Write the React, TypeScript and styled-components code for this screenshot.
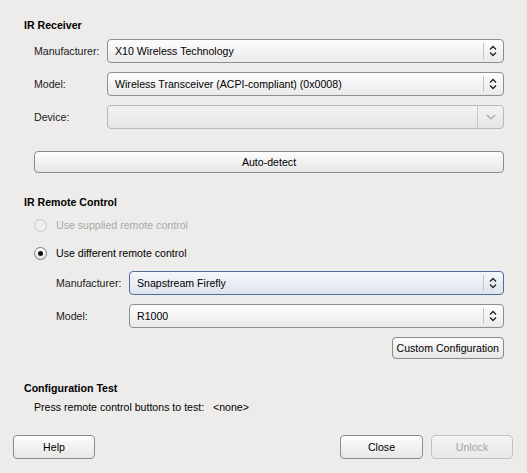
import React from "react";
import styled, {createGlobalStyle, css} from "styled-components";

const GlobalStyle = createGlobalStyle`
  html, body {
    margin: 0;
    padding: 0;
    background: #edecea;
  }
  body {
    font-family: "Liberation Sans", Arial, sans-serif;
    font-size: 10.6px;
    color: #000;
  }
`;

const Dialog = styled.div`
  width: 527px;
  height: 473px;
  box-sizing: border-box;
  padding: 18px 23px 0 24px;
  display: flex;
  flex-direction: column;
  position: relative;
`;

const SectionTitle = styled.div<{ top?: number }>`
  font-weight: bold;
  line-height: 14px;
  margin-top: ${props => props.top ?? 0}px;
`;

const Indent = styled.div<{ left: number }>`
  padding-left: ${props => props.left}px;
`;

const FormGrid = styled.div<{ top?: number }>`
  display: grid;
  grid-template-columns: 73px 1fr;
  row-gap: 9px;
  align-items: center;
  margin-top: ${props => props.top ?? 0}px;
`;

const Label = styled.span`
  line-height: 24px;
  color: #1a1a1a;
  white-space: nowrap;
`;

const ComboBox = styled.div<{ focused?: boolean; disabled?: boolean }>`
  height: 24px;
  box-sizing: border-box;
  border: 1px solid #8e8e8e;
  border-radius: 4px;
  background: linear-gradient(#fdfdfd, #eaeaea);
  display: flex;
  align-items: center;
  padding-left: 7px;

  ${props => props.focused && css`
    border-color: #4f6e98;
    background: linear-gradient(#f5f7fb, #dfe4ec);
  `};

  ${props => props.disabled && css`
    border-color: #b9b9b7;
    background: linear-gradient(#f2f2f1, #e6e6e5);
  `};
`;

const ComboText = styled.span`
  flex: 1;
  white-space: nowrap;
`;

const ArrowArea = styled.div`
  width: 18px;
  height: 16px;
  border-left: 1px solid #c4c4c4;
  display: flex;
  align-items: center;
  justify-content: center;
  margin-right: 1px;
`;

const DropButton = styled.div`
  width: 25px;
  align-self: stretch;
  border-left: 1px solid #c6c6c4;
  display: flex;
  align-items: center;
  justify-content: center;
`;

const PushButton = styled.button<{ width?: number; height?: number }>`
  font-family: "Liberation Sans", Arial, sans-serif;
  font-size: 10.6px;
  color: #000;
  height: ${props => props.height ?? 22}px;
  width: ${props => props.width ? `${props.width}px` : "auto"};
  box-sizing: border-box;
  border: 1px solid #8b8b8b;
  border-radius: 4px;
  background: linear-gradient(#fdfdfd, #e6e6e5);
  padding: 0 4px;
  cursor: default;

  &:disabled {
    color: #a3a3a3;
    border-color: #c2c2c0;
    background: linear-gradient(#f3f3f2, #e9e9e8);
  }
`;

const WideButton = styled(PushButton)`
  display: block;
  margin-top: 22px;
  margin-left: 10px;
  width: calc(100% - 10px);
`;

const RightRow = styled.div`
  display: flex;
  justify-content: flex-end;
  margin-top: 9px;
`;

const RadioRow = styled.label<{ disabled?: boolean; top: number }>`
  display: flex;
  align-items: center;
  gap: 9px;
  height: 18px;
  margin-top: ${props => props.top}px;
  padding-left: 10px;
  color: ${props => props.disabled ? "#a8a8a8" : "#000"};
`;

const RadioCircle = styled.span<{ checked?: boolean; disabled?: boolean }>`
  width: 13px;
  height: 13px;
  box-sizing: border-box;
  border-radius: 50%;
  border: 1px solid ${props => props.disabled ? "#c8c8c6" : "#7c7c7c"};
  background: ${props => props.disabled ? "#eeeeec" : "linear-gradient(#ffffff, #e2e2e2)"};
  display: flex;
  align-items: center;
  justify-content: center;

  ${props => props.checked && css`
    &::after {
      content: "";
      width: 5px;
      height: 5px;
      border-radius: 50%;
      background: #111;
    }
  `};
`;

const TestLine = styled.div`
  margin-top: 5px;
  padding-left: 10px;
  line-height: 14px;
  white-space: pre;
`;

const Footer = styled.div`
  position: absolute;
  left: 13px;
  right: 14px;
  bottom: 14px;
  display: flex;
  gap: 8px;
`;

const Spacer = styled.div`
  flex: 1;
`;

const UpDownIcon = () => (
  <svg width="8" height="12" viewBox="0 0 8 12">
    <path d="M1 4.5 L4 1.5 L7 4.5" fill="none" stroke="#222" strokeWidth="1.3"/>
    <path d="M1 7.5 L4 10.5 L7 7.5" fill="none" stroke="#222" strokeWidth="1.3"/>
  </svg>
);

const ChevronDown = () => (
  <svg width="10" height="6" viewBox="0 0 10 6">
    <path d="M1 1 L5 5 L9 1" fill="none" stroke="#a9a9a9" strokeWidth="1.2"/>
  </svg>
);

interface ComboProps {
  value?: string;
  focused?: boolean;
}

const Combo = ({value, focused}: ComboProps) => (
  <ComboBox focused={focused}>
    <ComboText>{value}</ComboText>
    <ArrowArea><UpDownIcon/></ArrowArea>
  </ComboBox>
);

export default function App() {
  return (
    <>
      <GlobalStyle/>
      <Dialog>
        <SectionTitle>IR Receiver</SectionTitle>
        <Indent left={10}>
          <FormGrid top={7}>
            <Label>Manufacturer:</Label>
            <Combo value="X10 Wireless Technology"/>
            <Label>Model:</Label>
            <Combo value="Wireless Transceiver (ACPI-compliant) (0x0008)"/>
            <Label>Device:</Label>
            <ComboBox disabled>
              <ComboText/>
              <DropButton><ChevronDown/></DropButton>
            </ComboBox>
          </FormGrid>
        </Indent>
        <WideButton>Auto-detect</WideButton>

        <SectionTitle top={22}>IR Remote Control</SectionTitle>
        <RadioRow disabled top={7}>
          <RadioCircle disabled/>
          Use supplied remote control
        </RadioRow>
        <RadioRow top={10}>
          <RadioCircle checked/>
          Use different remote control
        </RadioRow>
        <Indent left={32}>
          <FormGrid top={9}>
            <Label>Manufacturer:</Label>
            <Combo value="Snapstream Firefly" focused/>
            <Label>Model:</Label>
            <Combo value="R1000"/>
          </FormGrid>
          <RightRow>
            <PushButton>Custom Configuration</PushButton>
          </RightRow>
        </Indent>

        <SectionTitle top={22}>Configuration Test</SectionTitle>
        <TestLine>Press remote control buttons to test:   &lt;none&gt;</TestLine>

        <Footer>
          <PushButton width={82} height={24}>Help</PushButton>
          <Spacer/>
          <PushButton width={83} height={24}>Close</PushButton>
          <PushButton width={82} height={24} disabled>Unlock</PushButton>
        </Footer>
      </Dialog>
    </>
  );
}
